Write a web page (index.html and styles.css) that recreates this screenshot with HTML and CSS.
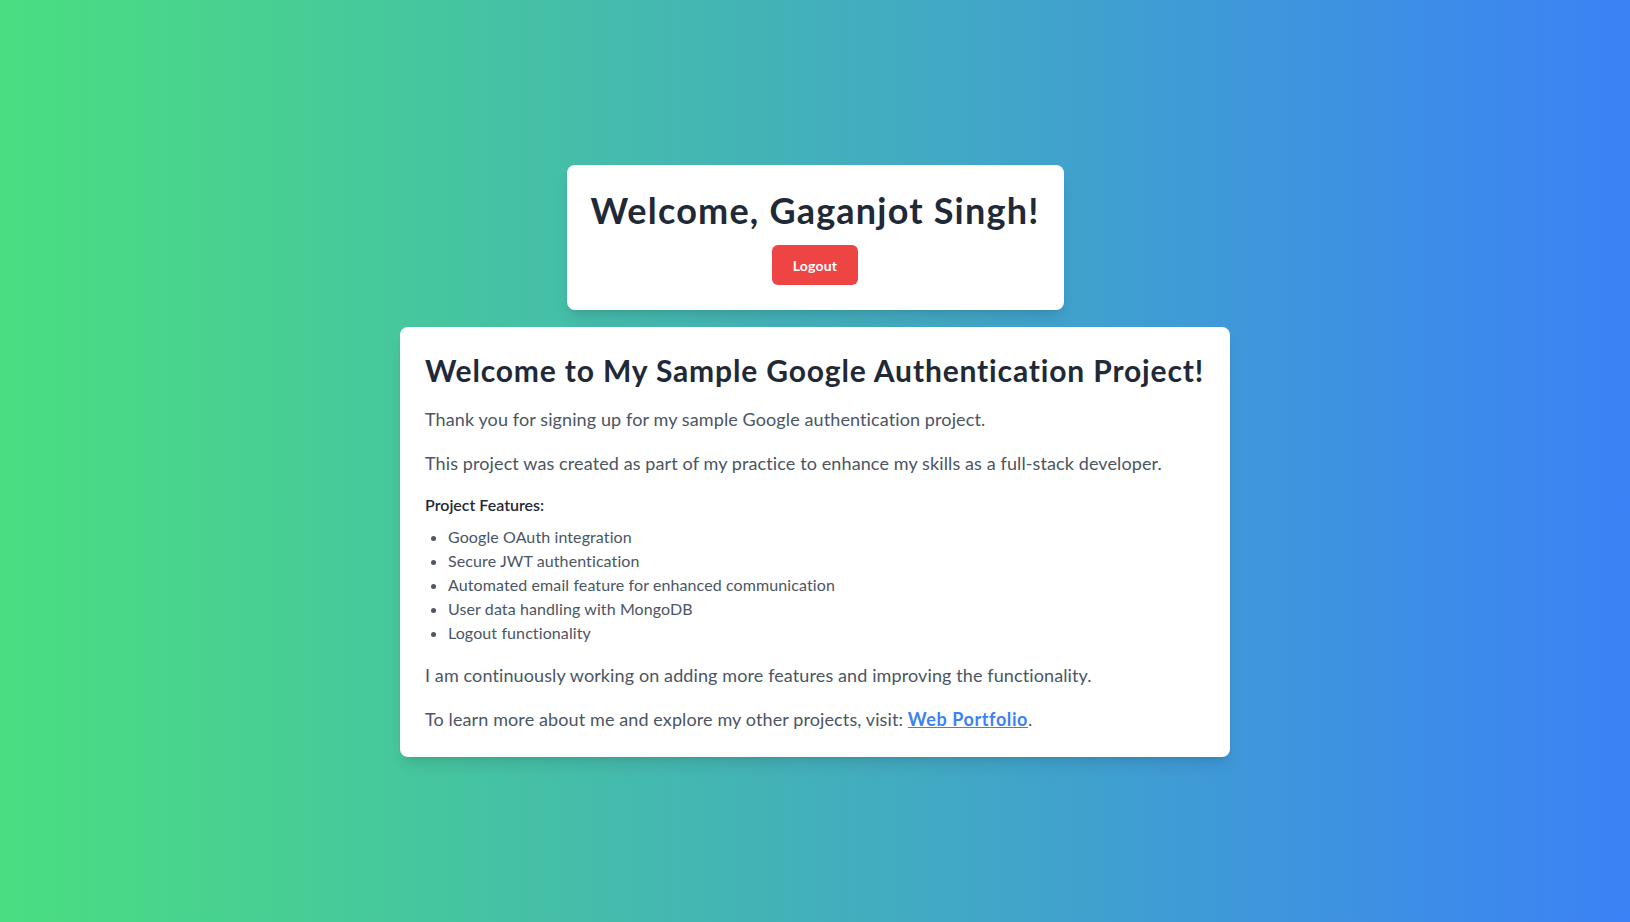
FILE: index.html
```html
<!DOCTYPE html>
<html lang="en">
<head>
<meta charset="utf-8">
<title>Dashboard</title>
<link rel="stylesheet" href="styles.css">
</head>
<body>
<main class="page">
  <section class="card card-top">
    <h1 class="greeting">Welcome, Gaganjot Singh!</h1>
    <button class="logout" type="button">Logout</button>
  </section>
  <section class="card card-main">
    <h2 class="title">Welcome to My Sample Google Authentication Project!</h2>
    <p class="text">Thank you for signing up for my sample Google authentication project.</p>
    <p class="text">This project was created as part of my practice to enhance my skills as a full-stack developer.</p>
    <h3 class="features-title">Project Features:</h3>
    <ul class="features">
      <li>Google OAuth integration</li>
      <li>Secure JWT authentication</li>
      <li>Automated email feature for enhanced communication</li>
      <li>User data handling with MongoDB</li>
      <li>Logout functionality</li>
    </ul>
    <p class="text">I am continuously working on adding more features and improving the functionality.</p>
    <p class="text last">To learn more about me and explore my other projects, visit: <a class="link" href="#">Web Portfolio</a>.</p>
  </section>
</main>
</body>
</html>
```

FILE: styles.css
```css
* { box-sizing: border-box; }
html, body { margin: 0; padding: 0; }
body {
  font-family: Lato, "Noto Sans", "Liberation Sans", sans-serif;
  background: linear-gradient(to right, #4ade80, #3b82f6);
  min-height: 100vh;
}
.page {
  min-height: 100vh;
  display: flex;
  flex-direction: column;
  align-items: center;
  justify-content: center;
}
.card {
  background: #fff;
  border-radius: 8px;
  box-shadow: 0 10px 15px -3px rgba(0,0,0,0.1), 0 4px 6px -4px rgba(0,0,0,0.1);
  padding: 24px;
}
.card-top {
  width: 497px;
  display: flex;
  flex-direction: column;
  align-items: center;
  padding-bottom: 25px;
  margin-bottom: 17px;
}
.greeting {
  margin: 0;
  font-size: 36px;
  line-height: 40px;
  font-weight: 700;
  color: #1f2937;
  white-space: nowrap;
  letter-spacing: 1.2px;
  position: relative;
  top: 1px;
}
.logout {
  margin-top: 16px;
  background: #ef4444;
  color: #fff;
  border: none;
  border-radius: 6px;
  font-family: inherit;
  font-size: 14px;
  font-weight: 700;
  letter-spacing: 0.2px;
  height: 40px;
  width: 86px;
  padding: 0;
}
.card-main {
  width: 830px;
  padding-left: 25px;
}
.title {
  margin: 0 0 18px;
  font-size: 30px;
  line-height: 36px;
  font-weight: 700;
  color: #1f2937;
  white-space: nowrap;
  letter-spacing: 0.85px;
  position: relative;
  top: 1px;
}
.text {
  margin: 0 0 16px;
  font-size: 18px;
  line-height: 28px;
  color: #4b5563;
  letter-spacing: 0.11px;
}
.text.last { margin-bottom: 0; }
.features-title {
  margin: 0 0 8px;
  font-size: 16px;
  line-height: 24px;
  font-weight: 600;
  color: #1f2937;
}
.features {
  margin: 0 0 16px;
  padding-left: 23px;
  list-style: disc;
  font-size: 16px;
  line-height: 24px;
  color: #4b5563;
  letter-spacing: 0.1px;
}
.link {
  color: #3b82f6;
  font-weight: 700;
  text-decoration: underline;
  letter-spacing: 0.6px;
}
```
